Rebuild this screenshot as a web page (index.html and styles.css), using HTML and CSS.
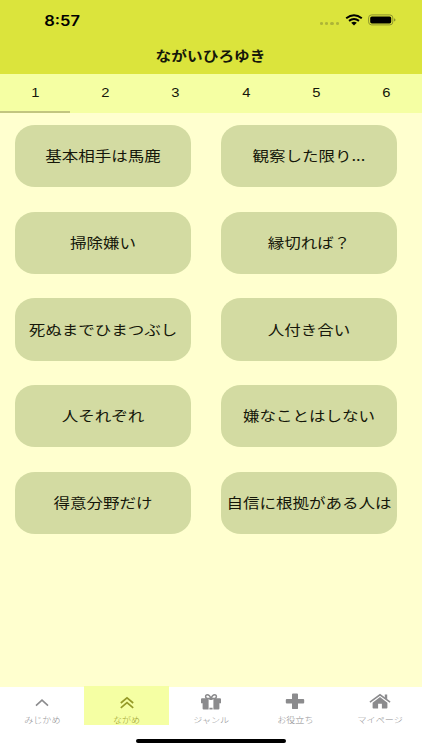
FILE: index.html
```html
<!DOCTYPE html>
<html lang="ja">
<head>
    <meta charset="UTF-8">
    <meta name="viewport" content="width=device-width, initial-scale=1.0">
    <title>ながいひろゆき</title>
    <link rel="stylesheet" href="styles.css">
</head>
<body>
    <header class="header">
        <div class="status">
            <span class="time">8:57</span>
            <div class="status-icons">
                <div class="signal"><i></i><i></i><i></i><i></i></div>
                <svg class="wifi" width="18" height="12" viewBox="0 0 18 12">
                    <path d="M1.2 4.3Q9 -1.8 16.8 4.3M4 6.9Q9 3.1 14 6.9" fill="none" stroke="#000" stroke-width="2"/>
                    <path d="M6.2 8.7Q9 6.8 11.8 8.7L9 11.4Z"/>
                </svg>
                <svg class="battery" width="28" height="12" viewBox="0 0 28 12">
                    <rect x=".6" y=".9" width="24.2" height="10" rx="3" fill="none" stroke="#8e952d"/>
                    <rect x="2.2" y="2.4" width="21" height="7" rx="1.6"/>
                    <path d="M26 4.2Q27.6 5 27.6 5.9T26 7.6Z" fill="#8e952d"/>
                </svg>
            </div>
        </div>
        <h1><span>ながいひろゆき</span></h1>
    </header>

    <nav class="tabs">
        <a class="tab active"><span>1</span></a>
        <a class="tab"><span>2</span></a>
        <a class="tab"><span>3</span></a>
        <a class="tab"><span>4</span></a>
        <a class="tab"><span>5</span></a>
        <a class="tab"><span>6</span></a>
    </nav>

    <main class="list">
        <button><span>基本相手は馬鹿</span></button>
        <button><span>観察した限り...</span></button>
        <button><span>掃除嫌い</span></button>
        <button><span>縁切れば？</span></button>
        <button><span>死ぬまでひまつぶし</span></button>
        <button><span>人付き合い</span></button>
        <button><span>人それぞれ</span></button>
        <button><span>嫌なことはしない</span></button>
        <button><span>得意分野だけ</span></button>
        <button><span>自信に根拠がある人は</span></button>
    </main>

    <footer class="footer">
        <nav class="menu">
            <a class="item">
                <svg width="24" height="20" viewBox="0 0 24 20"><path d="M6 13.6L12 8.2L18 13.6" fill="none" stroke="currentColor" stroke-width="1.6"/></svg>
                <span>みじかめ</span>
            </a>
            <a class="item active">
                <svg width="24" height="20" viewBox="0 0 24 20"><path d="M5.8 11L12 5.8L18.2 11M5.8 15.8L12 10.6L18.2 15.8" fill="none" stroke="currentColor" stroke-width="1.7"/></svg>
                <span>ながめ</span>
            </a>
            <a class="item">
                <svg width="24" height="20" viewBox="0 0 24 20">
                    <path d="M2 7.2Q2 6.2 3 6.2H9.6V11.2H2ZM14.4 6.2H21Q22 6.2 22 7.2V11.2H14.4ZM3.6 11H9.6V17.6H4.6Q3.6 17.6 3.6 16.6ZM14.4 11H20.4V16.6Q20.4 17.6 19.4 17.6H14.4ZM10.4 6.2H13.6V8H10.4ZM10.4 15.8H13.6V17.6H10.4Z" fill="currentColor"/>
                    <path d="M12 6.4Q10.4 2.8 8.4 2.8Q6.6 2.8 6.6 4.6Q6.6 6.4 8.4 6.4ZM12 6.4Q13.6 2.8 15.6 2.8Q17.4 2.8 17.4 4.6Q17.4 6.4 15.6 6.4Z" fill="none" stroke="currentColor" stroke-width="1.5"/>
                </svg>
                <span>ジャンル</span>
            </a>
            <a class="item">
                <svg width="24" height="20" viewBox="0 0 24 20"><path d="M10 1.4H14Q15 1.4 15 2.4V7H20.2Q21.2 7 21.2 7.9V10.6Q21.2 11.6 20.2 11.6H15V16.2Q15 17.1 14 17.1H10Q9 17.1 9 16.2V11.6H3.8Q2.8 11.6 2.8 10.6V7.9Q2.8 7 3.8 7H9V2.4Q9 1.4 10 1.4Z" fill="currentColor"/></svg>
                <span>お役立ち</span>
            </a>
            <a class="item">
                <svg width="24" height="20" viewBox="0 0 24 20">
                    <path d="M12 4.9L19.4 10.8V15.8Q19.4 16.6 18.6 16.6H13.9V11.8H10.1V16.6H5.4Q4.6 16.6 4.6 15.8V10.8ZM16.8 2.6H19.2V7.4L16.8 5.5Z" fill="currentColor"/>
                    <path d="M1.9 10.2L12 2.8L22.1 10.2" fill="none" stroke="currentColor" stroke-width="1.5"/>
                </svg>
                <span>マイページ</span>
            </a>
        </nav>
        <div class="home-bar"></div>
    </footer>
</body>
</html>
```
FILE: styles.css
```css
* {
    box-sizing: border-box;
}

body {
    margin: 0;
    height: 750px;
    display: flex;
    flex-direction: column;
    overflow: hidden;
    background-color: #ffffcf;
    color: #15170a;
    font-family: "Noto Sans CJK JP", sans-serif;
}

/* wide lettering */
h1 span,
.time,
.tab span,
.list span,
.item span {
    display: block;
    white-space: nowrap;
    transform: scaleX(1.18);
}

.header {
    height: 74px;
    background-color: #dbe43c;
}

.status {
    height: 38px;
    padding: 2px 26px 0 47px;
    display: flex;
    align-items: center;
    justify-content: space-between;
}

.time {
    font-family: Inter, sans-serif;
    font-size: 14px;
    font-weight: 600;
    color: #000;
}

.status-icons {
    display: flex;
    align-items: center;
}

.signal {
    display: flex;
    gap: 2px;
    margin: 7px 6px 0 0;
}

.signal i {
    width: 3.3px;
    height: 3px;
    border-radius: 50%;
    background-color: #aeb536;
}

.wifi {
    margin-right: 5px;
}

h1 {
    margin: 0;
    height: 34px;
    display: flex;
    align-items: center;
    justify-content: center;
    font-size: 13.3px;
    font-weight: 700;
}

.tabs {
    height: 39px;
    display: flex;
    background-color: #f5ffa3;
}

.tab {
    flex: 1;
    padding-top: 1px;
    display: flex;
    align-items: center;
    justify-content: center;
    border-bottom: 2px solid transparent;
    font-family: "Liberation Sans", sans-serif;
    font-size: 12.5px;
}

.tab.active {
    border-bottom-color: #c2c580;
}

.list {
    flex: 1;
    padding: 12px 25px 0 15px;
    display: grid;
    grid-template-columns: 1fr 1fr;
    grid-auto-rows: 62.3px;
    gap: 24.4px 30px;
}

.list button {
    padding: 0 0 2px;
    display: flex;
    align-items: center;
    justify-content: center;
    border: none;
    border-radius: 20px / 18px;
    background-color: #d3dba2;
    color: #15170a;
    font-family: inherit;
    font-size: 14px;
}

.footer {
    height: 63px;
    background-color: #fff;
}

.menu {
    height: 38px;
    display: flex;
}

.item {
    flex: 1;
    padding-top: 5px;
    display: flex;
    flex-direction: column;
    align-items: center;
    color: #8b8b8d;
    font-size: 7.7px;
    line-height: 16px;
}

.item.active {
    margin-top: -1px;
    padding-top: 6px;
    background-color: #f5ffa3;
    color: #959a28;
}

.item svg {
    flex: none;
}

.item span {
    font-weight: 300;
}

.home-bar {
    width: 150px;
    height: 4px;
    margin: 14px auto 0;
    border-radius: 2px;
    background-color: #000;
}
```
